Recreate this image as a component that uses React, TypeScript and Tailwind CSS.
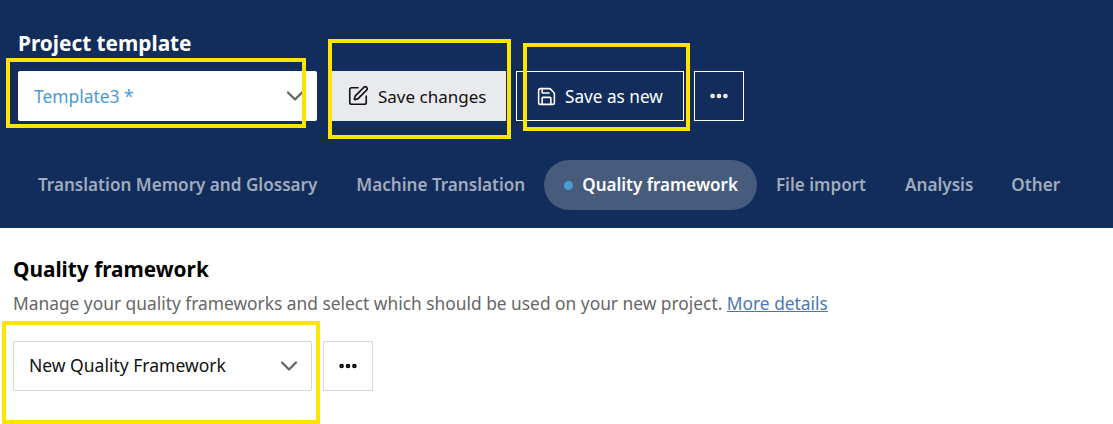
import React from 'react';
import { ChevronDown, Ellipsis, Save, SquarePen } from 'lucide-react';

const tabs = [
  { label: 'Translation Memory and Glossary', className: 'ml-[19px] pl-[19px] pr-[19px]' },
  { label: 'Machine Translation', className: 'pl-[20px] pr-[19px]' },
  { label: 'Quality framework', active: true },
  { label: 'File import', className: 'pl-[19px] pr-[20px]' },
  { label: 'Analysis', className: 'px-[19px]' },
  { label: 'Other', className: 'px-[19px]' },
];

// Annotation frames drawn over the screenshot
const YellowBox: React.FC<{ className: string }> = ({ className }) => (
  <div className={`absolute border-4 border-[#ffe400] pointer-events-none ${className}`} />
);

const App: React.FC = () => {
  return (
    <div className="relative w-[1113px] h-[424px] overflow-hidden bg-white font-['Noto_Sans',sans-serif]">
      {/* Header */}
      <div className="h-[228px] bg-[#122d5b] pt-[29px]">
        <h1 className="ml-[18px] text-[20.8px] leading-[28px] font-bold text-white">Project template</h1>
        <div className="flex mt-[14px] ml-[18px]">
          <div className="flex items-center justify-between w-[299px] h-[50px] pl-4 pr-[8px] bg-white rounded-[2px]">
            <span className="text-[17.4px] text-[#4a9ad4]">Template3 *</span>
            <ChevronDown size={28} strokeWidth={2} className="text-[#666]" />
          </div>
          <button className="flex items-center w-[175px] h-[50px] ml-[14px] pl-[16px] bg-[#e9eaee] text-[17px] text-[#111]">
            <SquarePen size={22} strokeWidth={1.75} />
            <span className="ml-[9px] translate-y-[1px]">Save changes</span>
          </button>
          <button className="flex items-center w-[168px] h-[50px] ml-[10px] pl-[19px] border border-white text-[17.2px] text-white">
            <Save size={21} strokeWidth={1.75} />
            <span className="ml-[8px] translate-y-[1px]">Save as new</span>
          </button>
          <button className="flex items-center justify-center w-[50px] h-[50px] ml-[10px] border border-white text-white">
            <Ellipsis size={22} strokeWidth={3} />
          </button>
        </div>
        <div className="flex items-center h-[50px] mt-[39px]">
          {tabs.map((tab) =>
            tab.active ? (
              <div
                key={tab.label}
                className="flex items-center h-[50px] pl-5 pr-[19px] rounded-[25px] bg-[#475b7c] text-[17px] font-semibold text-white"
              >
                <span className="w-[9px] h-[9px] rounded-full bg-[#4a9ad4] mr-[9px]" />
                {tab.label}
              </div>
            ) : (
              <div key={tab.label} className={`text-[17.1px] font-semibold text-[#a0abbd] ${tab.className}`}>
                {tab.label}
              </div>
            ),
          )}
        </div>
      </div>

      {/* Quality framework section */}
      <div className="pl-[13px] pt-[27px]">
        <h2 className="text-[20.8px] leading-[28px] font-bold text-black">Quality framework</h2>
        <p className="mt-[9px] text-[17.35px] leading-[22px] text-[#666]">
          Manage your quality frameworks and select which should be used on your new project.{' '}
          <a className="text-[#4a78b5] underline">More details</a>
        </p>
        <div className="flex mt-[27px]">
          <div className="flex items-center justify-between w-[299px] h-[50px] pl-[15px] pr-[8px] border border-[#d5d5d8] rounded-[2px]">
            <span className="text-[17.5px] text-[#111] -translate-y-[1px]">New Quality Framework</span>
            <ChevronDown size={28} strokeWidth={2} className="text-[#666]" />
          </div>
          <button className="flex items-center justify-center w-[50px] h-[50px] ml-[11px] border border-[#d5d5d8] text-black">
            <Ellipsis size={22} strokeWidth={3} />
          </button>
        </div>
      </div>

      <YellowBox className="left-[6px] top-[58px] w-[300px] h-[70px]" />
      <YellowBox className="left-[328px] top-[39px] w-[183px] h-[100px]" />
      <YellowBox className="left-[523px] top-[43px] w-[167px] h-[88px]" />
      <YellowBox className="left-[2px] top-[321px] w-[318px] h-[103px]" />
    </div>
  );
};

export default App;
